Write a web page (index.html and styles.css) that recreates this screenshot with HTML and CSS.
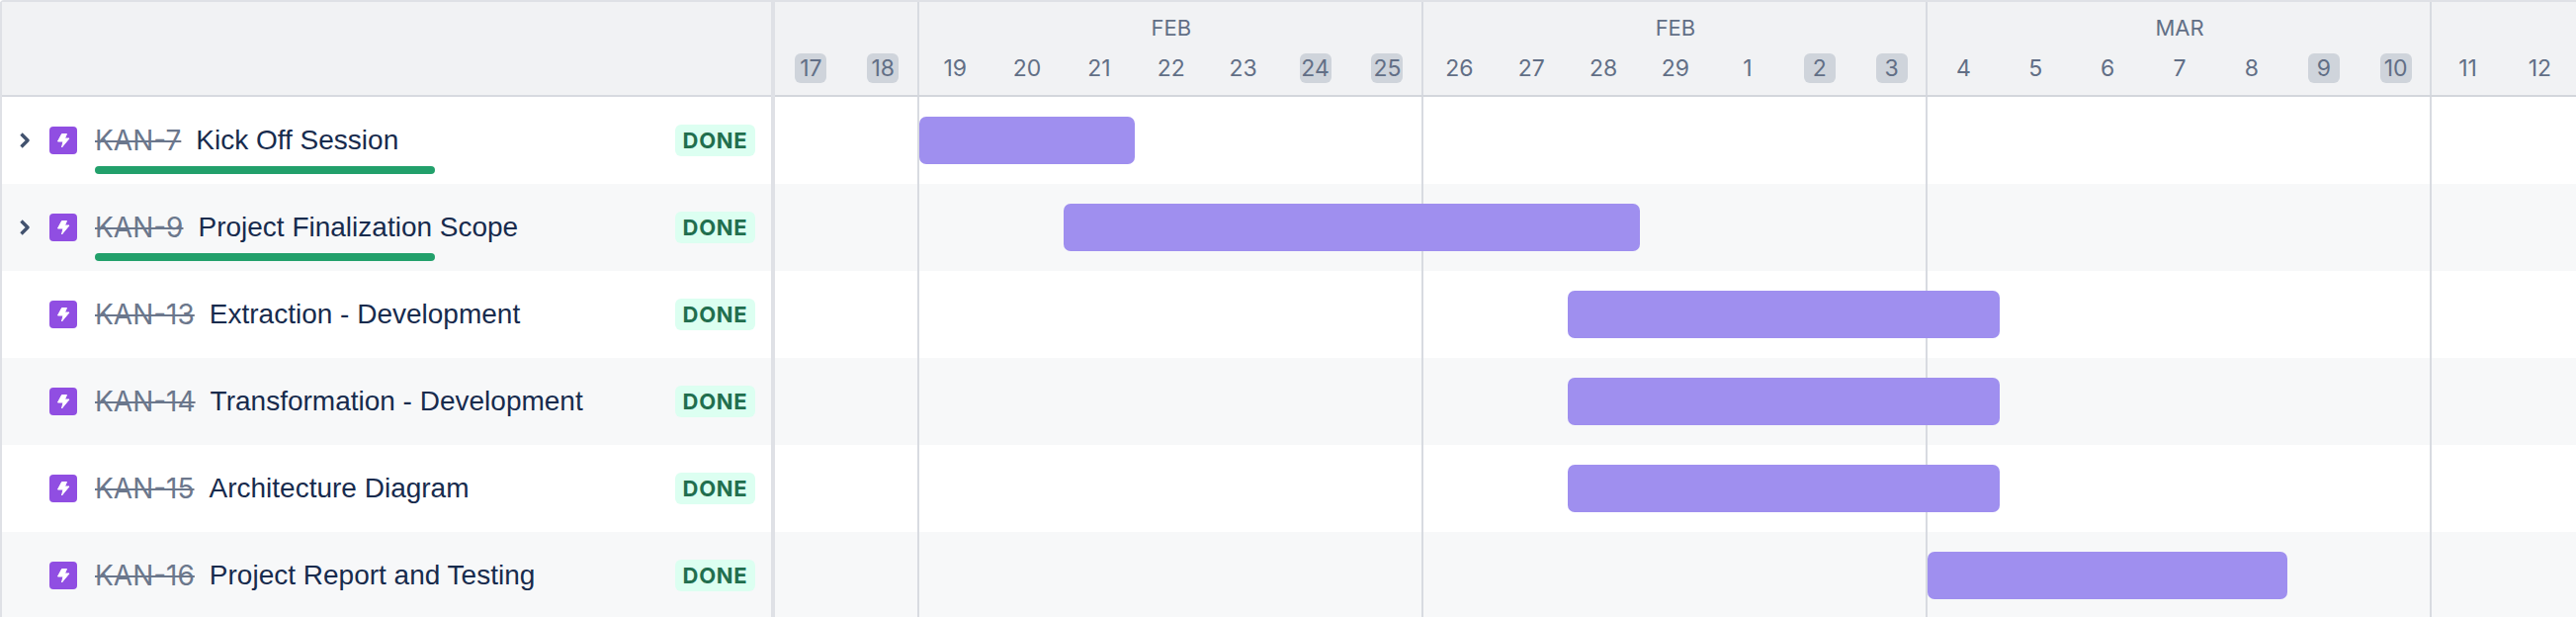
FILE: index.html
```html
<!DOCTYPE html>
<html lang="en">
<head>
<meta charset="utf-8">
<title>Timeline</title>
<link rel="stylesheet" href="styles.css">
</head>
<body>
<svg class="sprite" width="0" height="0" aria-hidden="true">
  <symbol id="epic" viewBox="0 0 28 28">
    <rect width="28" height="28" rx="4" fill="#904ee2"/>
    <path d="M12.500 7.500h5l-2 4.500h4.500l-7.500 9 1.500-6h-5.500z" fill="#fff" stroke="#fff" stroke-width="1" stroke-linejoin="round"/>
  </symbol>
  <symbol id="chev" viewBox="0 0 10 16">
    <path d="M1.500 1.500L8 8l-6.500 6.500" fill="none" stroke="#42526e" stroke-width="3.400" stroke-linejoin="round"/>
  </symbol>
</svg>
<main class="gantt">
  <section class="list">
    <div class="list-head"></div>
    <div class="row">
      <svg class="chev"><use href="#chev"/></svg>
      <svg class="epic"><use href="#epic"/></svg>
      <s class="key">KAN-7</s><span class="title">Kick Off Session</span>
      <span class="done">DONE</span>
      <span class="progress"></span>
    </div>
    <div class="row">
      <svg class="chev"><use href="#chev"/></svg>
      <svg class="epic"><use href="#epic"/></svg>
      <s class="key">KAN-9</s><span class="title">Project Finalization Scope</span>
      <span class="done">DONE</span>
      <span class="progress"></span>
    </div>
    <div class="row">
      <span class="chev"></span>
      <svg class="epic"><use href="#epic"/></svg>
      <s class="key">KAN-13</s><span class="title">Extraction - Development</span>
      <span class="done">DONE</span>
    </div>
    <div class="row">
      <span class="chev"></span>
      <svg class="epic"><use href="#epic"/></svg>
      <s class="key">KAN-14</s><span class="title">Transformation - Development</span>
      <span class="done">DONE</span>
    </div>
    <div class="row">
      <span class="chev"></span>
      <svg class="epic"><use href="#epic"/></svg>
      <s class="key">KAN-15</s><span class="title">Architecture Diagram</span>
      <span class="done">DONE</span>
    </div>
    <div class="row">
      <span class="chev"></span>
      <svg class="epic"><use href="#epic"/></svg>
      <s class="key">KAN-16</s><span class="title">Project Report and Testing</span>
      <span class="done">DONE</span>
    </div>
  </section>
  <section class="chart">
    <div class="chart-head">
      <div class="month m1">FEB</div>
      <div class="month m2">FEB</div>
      <div class="month m3">MAR</div>
      <div class="day"><span class="off">17</span></div>
      <div class="day"><span class="off">18</span></div>
      <div class="day"><span>19</span></div>
      <div class="day"><span>20</span></div>
      <div class="day"><span>21</span></div>
      <div class="day"><span>22</span></div>
      <div class="day"><span>23</span></div>
      <div class="day"><span class="off">24</span></div>
      <div class="day"><span class="off">25</span></div>
      <div class="day"><span>26</span></div>
      <div class="day"><span>27</span></div>
      <div class="day"><span>28</span></div>
      <div class="day"><span>29</span></div>
      <div class="day"><span>1</span></div>
      <div class="day"><span class="off">2</span></div>
      <div class="day"><span class="off">3</span></div>
      <div class="day"><span>4</span></div>
      <div class="day"><span>5</span></div>
      <div class="day"><span>6</span></div>
      <div class="day"><span>7</span></div>
      <div class="day"><span>8</span></div>
      <div class="day"><span class="off">9</span></div>
      <div class="day"><span class="off">10</span></div>
      <div class="day"><span>11</span></div>
      <div class="day"><span>12</span></div>
    </div>
    <div class="track"><div class="bar b1"></div></div>
    <div class="track"><div class="bar b2"></div></div>
    <div class="track"><div class="bar b3"></div></div>
    <div class="track"><div class="bar b3"></div></div>
    <div class="track"><div class="bar b3"></div></div>
    <div class="track"><div class="bar b4"></div></div>
  </section>
</main>
</body>
</html>
```
FILE: styles.css
```css
html, body {
  margin: 0;
  height: 624px;
  overflow: hidden;
  background: #fff;
}
body {
  font-family: "Inter", "Liberation Sans", sans-serif;
}
.sprite {
  display: block;
  height: 0;
}
.gantt {
  display: grid;
  grid-template-columns: 784px 1fr;
  border-top: 2px solid #dfe1e6;
  border-top-left-radius: 4px;
}
.list {
  border-left: 2px solid #dfe1e6;
  border-right: 4px solid #dfe1e6;
}
.list-head {
  height: 94px;
  background: #f1f2f4;
  border-bottom: 2px solid #d7dae0;
}
.row {
  position: relative;
  display: flex;
  align-items: center;
  height: 88px;
  padding-right: 16px;
}
.row:nth-of-type(odd),
.track:nth-child(odd) {
  background-color: #f7f8f9;
}
.chev {
  width: 10px;
  height: 16px;
  flex: none;
  margin: 0 20px 0 18px;
}
.epic {
  width: 28px;
  height: 28px;
  flex: none;
  margin-right: 18px;
}
.key {
  flex: none;
  margin-right: 15px;
  color: #6b778c;
  font-size: 28px;
  line-height: 32px;
}
.title {
  color: #172b4d;
  font-family: "Liberation Sans", sans-serif;
  font-size: 28px;
  line-height: 32px;
  white-space: nowrap;
}
.done {
  flex: none;
  margin-left: auto;
  width: 81px;
  height: 32px;
  border-radius: 6px;
  background: #dcfff1;
  color: #216e4e;
  font-size: 22px;
  font-weight: 700;
  letter-spacing: 0.7px;
  line-height: 32px;
  text-align: center;
}
.progress {
  position: absolute;
  left: 94px;
  top: 70px;
  width: 344px;
  height: 8px;
  border-radius: 4px;
  background: #22a06b;
}
.chart-head,
.track {
  display: grid;
  grid-template-columns: repeat(25, 72.88px);
  background-image: linear-gradient(to right, #d8dbe1 0, #d8dbe1 2px, transparent 2px);
  background-size: 510px 100%;
  background-position: 144px 0;
}
.chart-head {
  height: 94px;
  grid-template-rows: 52px 30px;
  background-color: #f1f2f4;
  border-bottom: 2px solid #d3d6dc;
}
.track {
  height: 48px;
  padding: 20px 0;
}
.month {
  grid-row: 1;
  align-self: center;
  color: #626f86;
  font-size: 22px;
  line-height: 50px;
  text-align: center;
}
.m1 { grid-column: 3 / span 7; }
.m2 { grid-column: 10 / span 7; }
.m3 { grid-column: 17 / span 7; }
.day {
  grid-row: 2;
  display: flex;
  justify-content: center;
  color: #626f86;
  font-size: 23px;
  line-height: 30px;
  text-align: center;
}
.day span {
  width: 32px;
  height: 30px;
  border-radius: 6px;
}
.day .off {
  background: #cfd4db;
}
.bar {
  height: 48px;
  border-radius: 7px;
  background: #9f8fef;
}
.b1 { grid-column: 3 / span 3; }
.b2 { grid-column: 5 / span 8; }
.b3 { grid-column: 12 / span 6; }
.b4 { grid-column: 17 / span 5; }
```
